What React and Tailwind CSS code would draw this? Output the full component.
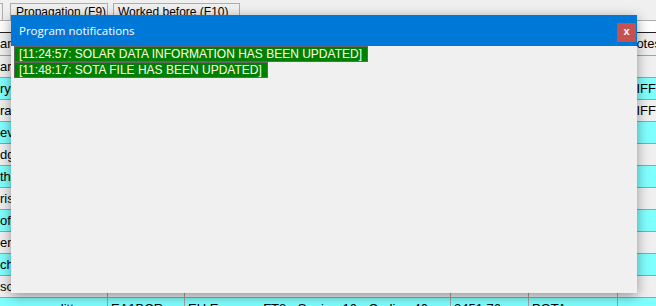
import React from 'react';

// background grid rows (only edges show around the dialog)
const rows = [
  { name: 'arrett', notes: '', cyan: false },
  { name: 'ry Evans', notes: 'DIFF-0341', cyan: true },
  { name: 'ra Hill', notes: 'DIFF-0211', cyan: false },
  { name: 'evin', notes: '', cyan: true },
  { name: 'dge', notes: '', cyan: false },
  { name: 'thony', notes: '', cyan: true },
  { name: 'ristian', notes: '', cyan: false },
  { name: 'off', notes: '', cyan: true },
  { name: 'enny', notes: '', cyan: false },
  { name: 'chael', notes: '', cyan: true },
  { name: 'son', notes: '', cyan: false },
];

const last = ['aaron pavlitt', 'EA1BCR', 'EU Europe - FT8 - Spain - 10 - Cadiz - 40', '2451.76', 'POTA', ''];

const messages = [
  '[11:24:57: SOLAR DATA INFORMATION HAS BEEN UPDATED]',
  '[11:48:17: SOTA FILE HAS BEEN UPDATED]',
];

const cols = 'grid grid-cols-[108px_77px_266px_78px_89px_1fr]';
const cell = 'border-r border-[#a0a0a0] px-[3px] whitespace-nowrap overflow-hidden';

const App = () => {
  return (
    <div className="relative w-[656px] h-[306px] overflow-hidden bg-[#f0f0f0] font-['Liberation_Sans',sans-serif] text-black">
      {/* tab strip */}
      <div className="flex items-end h-[21px] border-b border-[#adadad]">
        <div className="ml-[-60px] w-[63px] h-[17px] border border-b-0 border-[#adadad] bg-[#f0f0f0]" />
        <div className="ml-[7px] w-[98px] h-[17px] border border-b-0 border-[#adadad] bg-[#f0f0f0] text-[12px] leading-[14px] pl-[5px] pt-px whitespace-nowrap">
          Propagation (F9)
        </div>
        <div className="ml-[5px] w-[127px] h-[17px] border border-b-0 border-[#adadad] bg-[#f0f0f0] text-[12px] leading-[14px] pl-[4px] pt-px whitespace-nowrap">
          Worked before (F10)
        </div>
      </div>
      <div className="h-[11px] bg-white" />

      {/* grid */}
      <div className="text-[13px] leading-[21px] border-t border-[#222]">
        <div className={`${cols} h-[23px] bg-[#f0f0f0] border-b border-[#a0a0a0]`}>
          <div className={`${cell} pl-0 leading-[22px]`}>ame</div>
          <div className={cell}>Call</div>
          <div className={cell}>Info</div>
          <div className={cell}>Freq</div>
          <div className={cell}>Ref</div>
          <div className="pl-[9px] leading-[22px] whitespace-nowrap">Notes</div>
        </div>
        {rows.map((r, i) => (
          <div
            key={i}
            className={`${cols} h-[22px] border-b border-[#a0a0a0] ${r.cyan ? 'bg-[#80ffff]' : 'bg-[#f0f0f0]'}`}
          >
            <div className={`${cell} pl-0`}>{r.name}</div>
            <div className={cell} />
            <div className={cell} />
            <div className={cell} />
            <div className={cell} />
            <div className="pl-[9px] whitespace-nowrap">{r.notes}</div>
          </div>
        ))}
        <div className={`${cols} h-[22px] bg-[#80ffff]`}>
          {last.map((t, i) => (
            <div key={i} className={i < 5 ? cell : 'pl-[3px]'}>{t}</div>
          ))}
        </div>
      </div>

      {/* notifications dialog */}
      <div className="absolute left-[11px] top-[15px] w-[626px] h-[278px] flex flex-col bg-[#f0f0f0] shadow-[0_3px_12px_rgba(0,0,0,0.4)]">
        <div className="flex h-[31px] bg-[#0078d7] text-white">
          <span className="self-center pl-[8px] text-[11.5px] font-['Open_Sans',sans-serif]">Program notifications</span>
          <button className="ml-auto mr-px mt-[8px] w-[19px] h-[19px] bg-[#c75050] flex items-center justify-center text-[11px] font-bold leading-none pb-[2px]">
            x
          </button>
        </div>
        <div className="flex flex-col items-start px-[3px]">
          {messages.map(m => (
            <div
              key={m}
              className="h-[16px] border border-[#646464] bg-[#008000] text-[#ffffe8] text-[12px] leading-[14px] pl-[4px] pr-[5px] whitespace-nowrap"
            >
              {m}
            </div>
          ))}
        </div>
      </div>
    </div>
  );
};

export default App;
